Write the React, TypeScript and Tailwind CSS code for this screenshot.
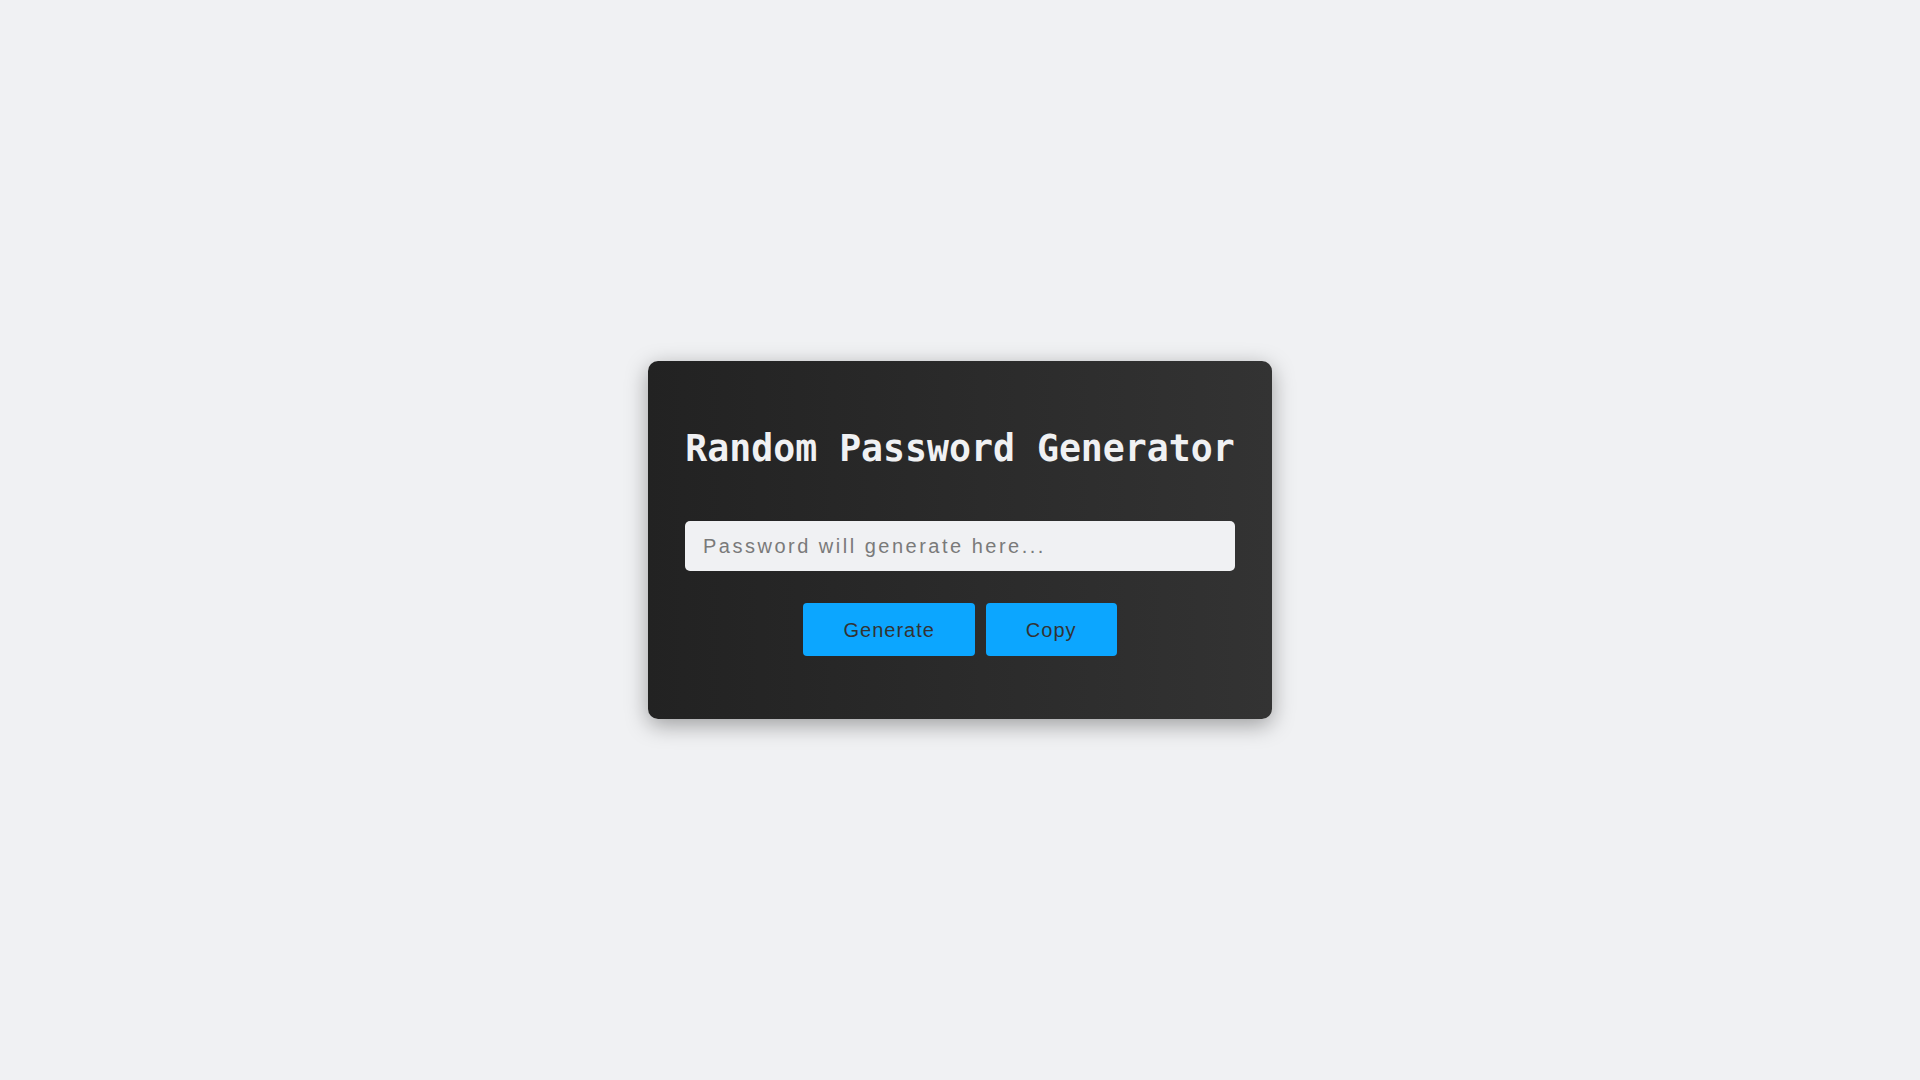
export default function App() {
  return (
    <div className="min-h-screen bg-[#f0f1f3] flex items-center justify-center font-['Liberation_Sans',Arial,sans-serif]">
      {/* Card */}
      <div className="w-[624px] rounded-[10px] bg-gradient-to-r from-[#222222] to-[#333333] shadow-[0_6px_22px_rgba(0,0,0,0.35)] px-[37px] pt-[66px] pb-[63px] flex flex-col items-center">
        <h1 className="font-['DejaVu_Sans_Mono',monospace] font-bold text-[36.5px] leading-[44px] text-[#f0f1f3] whitespace-nowrap">
          Random Password Generator
        </h1>

        <input
          type="text"
          readOnly
          placeholder="Password will generate here..."
          className="mt-[50px] w-[550px] h-[50px] rounded-[5px] bg-[#f0f1f3] pl-[18px] pr-4 text-[20px] tracking-[2.5px] text-[#333] placeholder:text-[#7a7a7a] outline-none"
        />

        <div className="mt-[32px] flex gap-[11px]">
          <button className="h-[53px] px-[40px] rounded-[4px] bg-[#0ca6ff] text-[20px] tracking-[1px] text-[#333]">
            Generate
          </button>
          <button className="h-[53px] px-[40px] rounded-[4px] bg-[#0ca6ff] text-[20px] tracking-[1px] text-[#333]">
            Copy
          </button>
        </div>
      </div>
    </div>
  );
}
